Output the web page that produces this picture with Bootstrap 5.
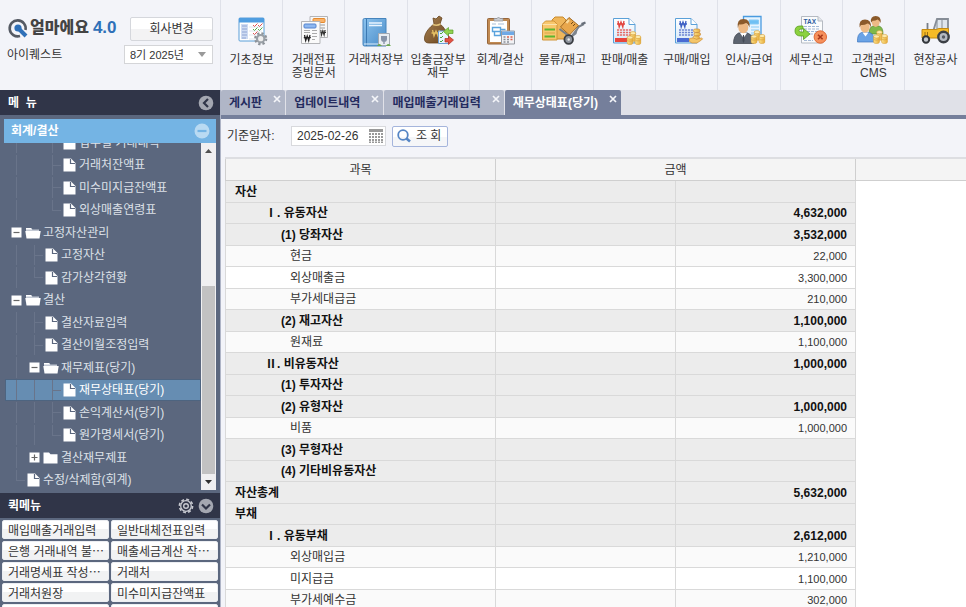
<!DOCTYPE html>
<html lang="ko">
<head>
<meta charset="utf-8">
<meta name="viewport" content="width=device-width, initial-scale=1">
<title>얼마에요 4.0 - 재무상태표(당기)</title>
<link href="https://cdn.jsdelivr.net/npm/bootstrap@5.3.0/dist/css/bootstrap.min.css" rel="stylesheet">
<style>
  body { font: 12px/16px "Liberation Sans", "Noto Sans CJK KR", sans-serif; color: #333; background: #f3f4f9; }
  a { color: inherit; text-decoration: none; }
  button, input, select { font: inherit; color: inherit; }
  svg { display: block; flex: none; }

  .brand-box { width: 221px; padding: 17px 7px 0; border-right: 1px solid #dfe1e9; }
  .brand-name { font-size: 16px; line-height: 22px; font-weight: 900; color: #444; }
  .brand-ver { font-size: 17px; line-height: 20px; font-weight: 700; color: #2f70b8; margin-left: 4px; }
  .soft-btn { border: 1px solid #d5d7dc; border-radius: 2px; background: linear-gradient(#fff 50%, #f3f3f4 50%); padding: 0; }
  .switch-btn { width: 83px; height: 24px; }
  .year-select { width: 89px; height: 19px; border: 1px solid #d4d5d8; border-radius: 0; padding: 0 0 0 5px; font-size: 11px; appearance: none;
    background: #fff url("data:image/svg+xml,%3Csvg xmlns='http://www.w3.org/2000/svg' width='8' height='5'%3E%3Cpath d='M0 0h8L4 5z' fill='%23999'/%3E%3C/svg%3E") no-repeat right 6px center; }

  .app-bar { height: 90px; }
  .module { flex: 1 1 0; min-width: 0; height: 90px; padding-top: 15px; border-right: 1px solid #dfe1e9; line-height: 13px; white-space: nowrap; }
  .module:last-child { border-right: 0; }
  .module span { margin-top: 7px; }
  .module svg { overflow: visible; }

  .side { width: 220px; background: #5b677e; color: #f1f3f7; }
  .side-title { height: 25px; background: #303548; color: #fff; font-weight: 700; padding: 0 6px 0 8px; }
  .icon-btn { border: 0; padding: 0; background: none; }
  .section-title { height: 24px; margin: 4px 4px 0; padding: 0 6px 0 7px; background: #74b4e4; color: #fff; font-weight: 700; }
  .tree-area { margin: 0 4px 3px 5px; min-height: 0; }
  .tree { margin: -12px 0 0; }
  .tree a { height: 22px; padding-left: 1px; border: 1px solid transparent; white-space: nowrap; color: #dde1e8; }
  .tree li:nth-child(odd) a { height: 23px; }
  .tree a.active { background: #668db2; border-color: #4d6480; color: #fff; }
  .guide { width: 18px; align-self: stretch; background: linear-gradient(#69748a, #69748a) center / 1px 100% no-repeat; }
  .guide.tick { background: linear-gradient(#69748a, #69748a) center / 1px 100% no-repeat, linear-gradient(#69748a, #69748a) right center / 9px 1px no-repeat; }
  .guide.last { background: linear-gradient(#69748a, #69748a) center top / 1px 50% no-repeat, linear-gradient(#69748a, #69748a) right center / 9px 1px no-repeat; }
  .twist { width: 18px; padding-left: 4px; }
  .leaf { width: 18px; padding-left: 2px; }
  .fold { width: 18px; }
  .scroll-track { width: 15px; background: #f0f0f1; }
  .scroll-space { flex: 127; }
  .scroll-thumb { flex: 187; background: #c2c2c2; margin: 0 1px; }
  .scroll-arrow { height: 16px; }

  .quick { height: 114px; }
  .quick-grid { grid-template-columns: 1fr 1fr; gap: 2px; padding: 2px 2px 0; }
  .quick-grid button { height: 19px; border: 1px solid #eceef2; border-radius: 2px; background: linear-gradient(#fff 50%, #f1f2f3 50%); color: #333; padding: 0 5px; line-height: 16px; text-align: left; white-space: nowrap; overflow: hidden; font-family: "Noto Sans CJK KR", sans-serif; }

  .workspace { border-left: 1px solid #aeb4c6; }
  .tab-strip { height: 29px; background: #e0e1e8; border-bottom: 4px solid #757f9b; gap: 1px; }
  .tab-item { background: #b0b6c7; color: #242b5e; font-weight: 700; border-radius: 2px 2px 0 0; padding: 0 4px 0 8px; gap: 11px; }
  .tab-item.active { background: #757f9b; color: #fff; }
  .tab-item button { margin-top: 5px; }
  .filter { height: 38px; padding: 3px 6px 7px; }
  .filter label { width: 64px; }
  .date-box { width: 95px; height: 20px; border: 1px solid #d8d9dd; background: #fff; padding: 0 2px 0 5px; }
  .date-box input { width: 70px; border: 0; padding: 0; background: none; outline: 0; font-size: 12px; }
  .search-btn { width: 56px; height: 21px; margin-left: 6px; border: 1px solid #a5b5dc; border-radius: 2px; background: linear-gradient(#fff 50%, #f5f6f8 50%); padding: 0 4px; gap: 5px; }

  .sheet { margin-left: 4px; background: #fff; border-top: 2px solid #dddee2; }
  .sheet table { table-layout: fixed; border-collapse: separate; border-spacing: 0; width: 100%; }
  .c-name { width: 271px; }
  .c-amt { width: 180px; }
  .sheet th, .sheet td { padding: 0; border: 0 solid #d9d9d9; border-bottom-width: 1px; border-right-width: 1px; line-height: 16px; white-space: nowrap; }
  .sheet thead th { height: 22px; background: #f4f4f4; font-weight: 400; text-align: center; border-color: #cfcfcf; }
  .sheet thead th:last-child { border-right: 0; }
  .sheet tbody th { height: 21px; border-left-width: 1px; font-weight: 400; }
  .sheet thead th:first-child { border-left-width: 1px; }
  .sheet tbody tr:nth-child(odd) th { height: 22px; }
  .sheet tbody tr { background: #fafafa; }
  .sheet tbody tr.plain { background: #fff; }
  .sheet tbody tr.total { background: #ececec; color: #111; }
  .sheet tbody .total th, .sheet tbody .total td { font-weight: 700; font-size: 12px; }
  .sheet tbody td { text-align: right; padding-right: 8px; font-size: 11px; }
  .sheet tbody td:last-child { background: #fff; border: 0; }
  .sheet .lv0 { padding-left: 9px; }
  .sheet .lv1 { padding-left: 39px; }
  .sheet .lv2 { padding-left: 55px; }
  .sheet .lv3 { padding-left: 64px; }
</style>
<script src="https://cdn.jsdelivr.net/npm/bootstrap@5.3.0/dist/js/bootstrap.bundle.min.js"></script>
</head>
<body class="vh-100 d-flex flex-column overflow-hidden">

<svg width="0" height="0" class="position-absolute" aria-hidden="true">
  <defs>
    <linearGradient id="gBlue" x2="1" y2="1"><stop stop-color="#8cc3ee"/><stop offset="1" stop-color="#4a8cc8"/></linearGradient>
    <linearGradient id="gPage" x2="0" y2="1"><stop stop-color="#fff"/><stop offset="1" stop-color="#d5e8f8"/></linearGradient>
    <linearGradient id="gBrown" x2="1" y2="1"><stop stop-color="#a98353"/><stop offset="1" stop-color="#6b4520"/></linearGradient>
    <linearGradient id="gGold" x2="1"><stop stop-color="#fbe08a"/><stop offset="1" stop-color="#e8ae3c"/></linearGradient>
    <symbol id="coins" viewBox="0 0 15 14">
      <g fill="url(#gGold)" stroke="#d9a13a" stroke-width=".6">
        <path d="M4 2.2v8h5v-8z"/><ellipse cx="6.5" cy="2.2" rx="2.9" ry="1.6" fill="#fdebad"/>
        <path d="M8.6 6v6c0 2 5.8 2 5.8 0V6z"/><ellipse cx="11.5" cy="6" rx="2.9" ry="1.6" fill="#fdebad"/>
        <path d="M.6 6.500v5.500c0 2 5.800 2 5.800 0V6.500z"/><ellipse cx="3.500" cy="6.500" rx="2.900" ry="1.600" fill="#fdebad"/>
      </g>
      <path d="M.8 9.300c1 1.200 4.400 1.200 5.400 0M8.800 9c1 1.200 4.400 1.200 5.400 0" fill="none" stroke="#d9a13a" stroke-width=".6"/>
    </symbol>
    <symbol id="doc" viewBox="0 0 13 14"><path d="M.5.500h7.500l4.500 4.500v8.500H.5z" fill="#fff"/><path d="M7.500 1v4.500H12" fill="none" stroke="#5b677e" stroke-width="1.200"/></symbol>
    <symbol id="open" viewBox="0 0 16 12"><path d="M1 1h5l1.500 1.500H14V4H1z" fill="#c3c9d4"/><path d="M.3 4h15.400L14.500 11.500h-13z" fill="#fff"/><path d="M1 1h5l1 1.500H1z" fill="#fff"/></symbol>
    <symbol id="closed" viewBox="0 0 16 12"><path d="M.5.500h5.500L7.500 2.200h7v9.300H.5z" fill="#fff"/></symbol>
    <symbol id="minus" viewBox="0 0 11 11"><path d="M.5.500h10v10H.5z" fill="#fff"/><path d="M2.500 5.500h6" stroke="#666" stroke-width="1.200"/></symbol>
    <symbol id="plus" viewBox="0 0 11 11"><path d="M.5.500h10v10H.5z" fill="#fff"/><path d="M2.500 5.500h6M5.500 2.500v6" stroke="#666" stroke-width="1.200"/></symbol>
    <symbol id="cross" viewBox="0 0 8 8"><path d="M1 1l6 6M7 1L1 7" stroke="#f4f5f9" stroke-width="1.700"/></symbol>
  </defs>
</svg>

<header class="app-bar d-flex flex-shrink-0">
  <div class="brand-box flex-shrink-0 d-flex justify-content-between">
    <div>
      <div class="d-flex align-items-center">
        <svg width="23" height="22" viewBox="0 0 23 22" aria-hidden="true"><path d="M13 19A8 8 0 1 1 18.500 13" fill="none" stroke="#555a63" stroke-width="2.600"/><circle cx="11" cy="11" r="3.600" fill="#2f70b8"/><path d="M12 12l7 7" stroke="#2f70b8" stroke-width="4"/></svg>
        <span class="brand-name">얼마에요</span><span class="brand-ver">4.0</span>
      </div>
      <div class="mt-1 pt-1">아이퀘스트</div>
    </div>
    <div class="d-flex flex-column align-items-end">
      <button type="button" class="soft-btn switch-btn">회사변경</button>
      <select class="year-select mt-1" aria-label="회계기수"><option>8기 2025년</option></select>
    </div>
  </div>

  <nav class="d-flex flex-fill" aria-label="업무">
    <a href="#" class="module d-flex flex-column align-items-center text-center">
      <svg width="32" height="32" viewBox="0 0 32 32"><rect x="3" y="3" width="25" height="23" rx="1" fill="#fff" stroke="#5a9fd8"/><path d="M3 3h25v4.500H3z" fill="#4f9de0"/><path d="M5 9h7v15H5z" fill="#cfdcf3"/><path d="M6 11h5M6 14h5M6 17h5M6 20h5M6 23h4" stroke="#8ea4d4"/><path d="M13 12h13M13 16h13M13 20h13M13 24h8" stroke="#d4dde8" stroke-width=".7"/><path d="M17 10l1.500 1.500 3-3M22 10l1.500 1.500 3-3M17 18l1.500 1.500 3-3" fill="none" stroke="#e05252"/><path d="M17 14l1.500 1.500 3-3M22 14l1.500 1.500 3-3" fill="none" stroke="#56ae4c"/><circle cx="24.700" cy="23.700" r="5.300" fill="none" stroke="#8c9299" stroke-width="2.600" stroke-dasharray="2.200 1.970"/><circle cx="24.700" cy="23.700" r="3.700" fill="#eee" stroke="#999fa6" stroke-width="2.200"/></svg>
      <span>기초정보</span></a>
    <a href="#" class="module d-flex flex-column align-items-center text-center">
      <svg width="32" height="32" viewBox="0 0 32 32"><g stroke="#b4b5b8" fill="#f7f7f7"><path d="M12 1.500h17.500v21H12z"/></g><rect x="15" y="3.500" width="12" height="4" rx="1" fill="#f9b268" stroke="#e58a2e"/><path d="M15 10h12M20 13h7M23 16h4" stroke="#999"/><path d="M22.500 15l1 5 1.300-4 1.300 4 1-5M22 17.500h6" fill="none" stroke="#333" stroke-width="1.200"/><path d="M3.500 6.500h18.500V28.500H3.500z" fill="#fafafa" stroke="#b4b5b8"/><rect x="6" y="9" width="12" height="4" rx="1" fill="#8eb8f0" stroke="#5584d0"/><path d="M6 15.500h6M6 17.500h6M14 15.500h5M14 18.500h5M14 21.500h5M14 24.500h3" stroke="#aaa"/><path d="M6.500 20l1.200 5.500L9.200 21l1.500 4.500L12 20M5.800 22.700h7" fill="none" stroke="#222" stroke-width="1.300"/></svg>
      <span>거래전표<br>증빙문서</span></a>
    <a href="#" class="module d-flex flex-column align-items-center text-center">
      <svg width="32" height="32" viewBox="0 0 32 32"><path d="M3 5q0-1.500 1.500-1.500H26V31H4.500Q3 31 3 29.500z" fill="url(#gBlue)" stroke="#4684bd"/><path d="M6.500 4v27" stroke="#3c79b3"/><path d="M9 8h13M9 10.500h13" stroke="#eaf5ff" stroke-width="1.300"/><path d="M4 29h22" stroke="#dcecfa"/><path d="M18.500 18.500h11v12h-11z" fill="#e9edf2" stroke="#a2a8b0"/><path d="M21 21h6v3q0 3-3 3t-3-3zM23.300 27h1.400v2h-1.400z" fill="#8894a8"/><path d="M17 31q2-4 5 0zM26 31q2-4 5 0z" fill="#6aa84c"/></svg>
      <span>거래처장부</span></a>
    <a href="#" class="module d-flex flex-column align-items-center text-center">
      <svg width="32" height="32" viewBox="0 0 32 32"><path d="M11 3l3 1 3-3 3 2-2 6c4 3 8 9 7 14q-.5 5-6 5H7q-5 0-4.500-5C3 17 8 12 12 9z" fill="url(#gBrown)" stroke="#67451f" stroke-width=".8"/><path d="M11 9.500q4 1.500 7.500-.5" stroke="#e4c47c" stroke-width="1.500" fill="none"/><path d="M10.500 15l1.500 6 2-5 2 5 1.500-6M9.500 18h9" fill="none" stroke="#e2bd64" stroke-width="1.300"/><path d="M16.500 16h10v12.500h-10z" fill="#e9f3ff" stroke="#6da0d6"/><path d="M18 18l1 1 2-2M18 22l1 1 2-2M18 26l1 1 2-2" fill="none" stroke="#4ba53f"/><path d="M21.500 16.500l5-4V15H31v3.500h-4.500V21z" fill="#91d14f" stroke="#5a9f2a" stroke-width=".7"/><path d="M31.500 25l-5-4v2.500H23V27h3.500v2.500z" fill="#e35142" stroke="#ad2e22" stroke-width=".7"/></svg>
      <span>입출금장부<br>재무</span></a>
    <a href="#" class="module d-flex flex-column align-items-center text-center">
      <svg width="32" height="32" viewBox="0 0 32 32"><rect x="3.500" y="3.500" width="22" height="25.500" rx="1" fill="#c18a52" stroke="#96653a"/><path d="M6 6h17v21H6z" fill="#fff"/><path d="M10 6V3.500h3q1.500-3 3 0h3V6z" fill="#c9ccd2" stroke="#8f949c" stroke-width=".7"/><path d="M8 9h4M14 9h6" stroke="#a9bfd9"/><path d="M8.500 12.500h8v4h-8zM10.500 16.500v4h6v-6h5" fill="none" stroke="#5aa3dd" stroke-width="1.400"/><path d="M17.500 16h13v13h-13z" fill="#f1f2f5" stroke="#979ba2"/><path d="M18 16.500h12V20H18z" fill="#6fa9e6"/><path d="M19.500 22h2M19.500 24.500h2M19.500 27h2M23 24.500h2M23 27h2" stroke="#8b8f96" stroke-width="1.500"/><path d="M23 22h2M26.500 22h2M26.500 24.500h2" stroke="#e0604c" stroke-width="1.500"/></svg>
      <span>회계/결산</span></a>
    <a href="#" class="module d-flex flex-column align-items-center text-center">
      <svg width="48" height="32" viewBox="0 0 48 32"><path d="M14 5l3-3h8l3 3v19H14z" fill="#efb65b" stroke="#c98a2c"/><path d="M4.500 9l3-3h8.500l3 3v16H4.500z" fill="#f8c76d" stroke="#d1963a"/><path d="M4.500 9.500H19" stroke="#fbe3ac"/><path d="M6.500 14.500H17M6.500 21.500H17" stroke="#5cb531" stroke-width="1.800"/><path d="M6.500 18H17" stroke="#d9a545"/><path d="M21.500 14l11.500 8.500 8-11 5-2.500" fill="none" stroke="#777e88" stroke-width="2"/><path d="M31 2.500l9.500 8-9 9.500-9-8z" fill="#e9a74c" stroke="#9f6a26"/><path d="M31 5l-2.500 3" stroke="#f9dca0" stroke-width="2"/><path d="M33 9l2-2M35 11l2-2" stroke="#6f4618"/><path d="M28 20l4 1.500 8-8.500-1.500 6-6 4.500z" fill="#7d848e"/><circle cx="30.700" cy="24.500" r="4.300" fill="#8e949e" stroke="#3a3d43" stroke-width="1.800"/><circle cx="30.700" cy="24.500" r="1.200" fill="#eee"/><path d="M43.500 9l4-1.500" stroke="#666d78" stroke-width="2.400"/></svg>
      <span>물류/재고</span></a>
    <a href="#" class="module d-flex flex-column align-items-center text-center">
      <svg width="32" height="32" viewBox="0 0 32 32"><path d="M4.500 3.500H20l6 6V28H4.500z" fill="url(#gPage)" stroke="#5aa0d8"/><path d="M20 3.500v6h6" fill="#fff" stroke="#5aa0d8"/><path d="M9 6l1.200 6 1.800-5 1.800 5L15 6M8 9h8" fill="none" stroke="#e2453f" stroke-width="1.300"/><path d="M8 15h15M8 17.500h15M8 20h15" stroke="#e56a64" stroke-width="1.500" stroke-dasharray="2.200 .8"/><path d="M6 23h12v4H6z" fill="#e8443b"/><use href="#coins" x="17.500" y="16" width="15" height="14"/></svg>
      <span>판매/매출</span></a>
    <a href="#" class="module d-flex flex-column align-items-center text-center">
      <svg width="32" height="32" viewBox="0 0 32 32"><path d="M4.500 3.500H20l6 6V28H4.500z" fill="url(#gPage)" stroke="#5aa0d8"/><path d="M20 3.500v6h6" fill="#fff" stroke="#5aa0d8"/><path d="M9 6l1.200 6 1.800-5 1.800 5L15 6M8 9h8" fill="none" stroke="#3c5fc4" stroke-width="1.300"/><path d="M8 15h15M8 17.500h15M8 20h15" stroke="#6e86d2" stroke-width="1.500" stroke-dasharray="2.200 .8"/><path d="M6 23h12v4H6z" fill="#4a6bd3"/><g fill="url(#gGold)" stroke="#c88a3a" stroke-width=".7"><rect x="22.500" y="14" width="6.500" height="3.500" rx="1.700"/><rect x="23" y="17.500" width="6.500" height="3.500" rx="1.700"/><rect x="22" y="21" width="6.500" height="3.500" rx="1.700"/></g><path d="M18.500 23.500q4-1.500 7 .8l5-1.300q2 .5 0 2L26 28h-5l-2.500-1.500z" fill="#f4c66a" stroke="#d08f36" stroke-width=".7"/></svg>
      <span>구매/매입</span></a>
    <a href="#" class="module d-flex flex-column align-items-center text-center">
      <svg width="32" height="32" viewBox="0 0 32 32"><path d="M10.500 1.500h17.500v19H10.500z" fill="#e6f4ff" stroke="#4a9be0" stroke-width="1.300"/><path d="M16 5h9.500v4H16zM18 12h8M18 15h8M18 18h6" fill="#6fc0f4" stroke="#8acbf5"/><path d="M.5 28.500q0-8 5-10.500h9q6 2 6 10.500z" fill="#5d6470" stroke="#3c414a" stroke-width=".7"/><path d="M7 18l3.500 5 3.500-5z" fill="#fff"/><path d="M10 20h1l.5 6-1 2-1-2z" fill="#454b57"/><ellipse cx="10.300" cy="12.500" rx="5" ry="5.800" fill="#edba86"/><path d="M4.800 13Q3.500 4 10.500 4t6 8.500q-1.500-4-3.500-4.500-4 2-7 1.500z" fill="#8b5a2b"/><use href="#coins" x="17.500" y="15" width="15" height="14"/></svg>
      <span>인사/급여</span></a>
    <a href="#" class="module d-flex flex-column align-items-center text-center">
      <svg width="32" height="32" viewBox="0 0 32 32"><path d="M6.500 1.500H23l4.500 4.500V28H6.500z" fill="#fafbfc" stroke="#b5bac2"/><path d="M23 1.500V6h4.500" fill="#e3e6ea" stroke="#b5bac2"/><text x="8.500" y="9" font-size="6.500" font-weight="700" fill="#2c5c9e">TAX</text><path d="M9 11.500h15M9 14h15M12 16.500h12M15 19h6M9 25.500h9" stroke="#a3b9d6" stroke-dasharray="3 1"/><path d="M8 11H5Q0 11 0 16t6 5h2.500v3.500L15 19l-6.500-5.500V17H6q-2 0-2-1.500T6 14h2z" fill="#8cd13f" stroke="#58a01e" stroke-width=".8"/><circle cx="25.300" cy="22" r="6.200" fill="#f6905c" stroke="#df6a35"/><path d="M23 19.700l4.600 4.600M27.600 19.700L23 24.300" stroke="#a8381a" stroke-width="1.600"/></svg>
      <span>세무신고</span></a>
    <a href="#" class="module d-flex flex-column align-items-center text-center">
      <svg width="32" height="32" viewBox="0 0 32 32"><path d="M12 19q0-7 4-8h6q4 1 4 8z" fill="#80b84a" stroke="#56892b" stroke-width=".7"/><ellipse cx="18.700" cy="7" rx="4" ry="5" fill="#edba86"/><path d="M14 7.500Q13 1 18.700 1t5 7q-1.500-3-3-3.500-3 1.500-5 1.200z" fill="#8b5a2b"/><path d="M.5 27q-.5-8 4-9.500h8q5 1.500 4.500 9.500z" fill="#6aa3e6" stroke="#3c74bd" stroke-width=".7"/><path d="M5.500 17.500l3 4 3-4z" fill="#fff"/><ellipse cx="8" cy="12" rx="4.700" ry="5.500" fill="#edba86"/><path d="M2.600 12.500Q1.500 4.500 8 4.500t6 8q-1.500-4-3.500-4-3.500 2-6.500 1.500z" fill="#8b5a2b"/><use href="#coins" x="16" y="15" width="15" height="14"/></svg>
      <span>고객관리<br>CMS</span></a>
    <a href="#" class="module d-flex flex-column align-items-center text-center">
      <svg width="32" height="32" viewBox="0 0 32 32"><path d="M14.500 15L18 4h11v13" fill="#dfe6ed" stroke="#868d97" stroke-width="1.800"/><path d="M18 4v11M23 4v11" stroke="#868d97"/><path d="M8.500 8v8" stroke="#777e88" stroke-width="1.800"/><path d="M3 14.500h14l3-1h9.500V23H3z" fill="#f6bb27" stroke="#c48a12"/><path d="M6 17v4M8.500 17v4" stroke="#9b6e12"/><circle cx="7" cy="24.500" r="3.200" fill="#c4c8ce" stroke="#33363b" stroke-width="2"/><circle cx="24.500" cy="22" r="5.200" fill="#b5bac2" stroke="#3c4046" stroke-width="2.400"/><circle cx="24.500" cy="22" r="1.700" fill="#555b64"/></svg>
      <span>현장공사</span></a>
  </nav>
</header>

<div class="d-flex flex-fill overflow-hidden">
  <aside class="side flex-shrink-0 d-flex flex-column">
    <div class="side-title d-flex align-items-center justify-content-between flex-shrink-0">
      <span>메&nbsp; 뉴</span>
      <button type="button" class="icon-btn" aria-label="메뉴 접기"><svg width="16" height="16" viewBox="0 0 16 16"><circle cx="8" cy="8" r="7.300" fill="#a4a7b1"/><path d="M10 4L6 8l4 4" fill="none" stroke="#303548" stroke-width="2.200"/></svg></button>
    </div>
    <div class="section-title d-flex align-items-center justify-content-between flex-shrink-0">
      <span>회계/결산</span>
      <button type="button" class="icon-btn" aria-label="접기"><svg width="16" height="16" viewBox="0 0 16 16"><circle cx="8" cy="8" r="7.500" fill="#b9daf2"/><path d="M3.500 8h9" stroke="#74b4e4" stroke-width="2.200"/></svg></button>
    </div>
    <div class="tree-area d-flex flex-fill overflow-hidden">
      <ul class="tree list-unstyled flex-fill">
        <li><a href="#" class="d-flex align-items-center"><span class="guide"></span><span class="guide opacity-0"></span><span class="guide tick"></span><span class="leaf"><svg width="13" height="14"><use href="#doc"/></svg></span>업무별 거래내역</a></li>
        <li><a href="#" class="d-flex align-items-center"><span class="guide"></span><span class="guide opacity-0"></span><span class="guide tick"></span><span class="leaf"><svg width="13" height="14"><use href="#doc"/></svg></span>거래처잔액표</a></li>
        <li><a href="#" class="d-flex align-items-center"><span class="guide"></span><span class="guide opacity-0"></span><span class="guide tick"></span><span class="leaf"><svg width="13" height="14"><use href="#doc"/></svg></span>미수미지급잔액표</a></li>
        <li><a href="#" class="d-flex align-items-center"><span class="guide"></span><span class="guide opacity-0"></span><span class="guide last"></span><span class="leaf"><svg width="13" height="14"><use href="#doc"/></svg></span>외상매출연령표</a></li>
        <li><a href="#" class="d-flex align-items-center"><span class="twist"><svg width="11" height="11"><use href="#minus"/></svg></span><span class="fold"><svg width="16" height="12"><use href="#open"/></svg></span>고정자산관리</a></li>
        <li><a href="#" class="d-flex align-items-center"><span class="guide"></span><span class="guide tick"></span><span class="leaf"><svg width="13" height="14"><use href="#doc"/></svg></span>고정자산</a></li>
        <li><a href="#" class="d-flex align-items-center"><span class="guide"></span><span class="guide last"></span><span class="leaf"><svg width="13" height="14"><use href="#doc"/></svg></span>감가상각현황</a></li>
        <li><a href="#" class="d-flex align-items-center"><span class="twist"><svg width="11" height="11"><use href="#minus"/></svg></span><span class="fold"><svg width="16" height="12"><use href="#open"/></svg></span>결산</a></li>
        <li><a href="#" class="d-flex align-items-center"><span class="guide"></span><span class="guide tick"></span><span class="leaf"><svg width="13" height="14"><use href="#doc"/></svg></span>결산자료입력</a></li>
        <li><a href="#" class="d-flex align-items-center"><span class="guide"></span><span class="guide tick"></span><span class="leaf"><svg width="13" height="14"><use href="#doc"/></svg></span>결산이월조정입력</a></li>
        <li><a href="#" class="d-flex align-items-center"><span class="guide"></span><span class="twist"><svg width="11" height="11"><use href="#minus"/></svg></span><span class="fold"><svg width="16" height="12"><use href="#open"/></svg></span>재무제표(당기)</a></li>
        <li><a href="#" class="d-flex align-items-center active" aria-current="page"><span class="guide"></span><span class="guide"></span><span class="guide tick"></span><span class="leaf"><svg width="13" height="14"><use href="#doc"/></svg></span>재무상태표(당기)</a></li>
        <li><a href="#" class="d-flex align-items-center"><span class="guide"></span><span class="guide"></span><span class="guide tick"></span><span class="leaf"><svg width="13" height="14"><use href="#doc"/></svg></span>손익계산서(당기)</a></li>
        <li><a href="#" class="d-flex align-items-center"><span class="guide"></span><span class="guide"></span><span class="guide last"></span><span class="leaf"><svg width="13" height="14"><use href="#doc"/></svg></span>원가명세서(당기)</a></li>
        <li><a href="#" class="d-flex align-items-center"><span class="guide"></span><span class="twist"><svg width="11" height="11"><use href="#plus"/></svg></span><span class="fold"><svg width="16" height="12"><use href="#closed"/></svg></span>결산재무제표</a></li>
        <li><a href="#" class="d-flex align-items-center"><span class="guide last"></span><span class="leaf"><svg width="13" height="14"><use href="#doc"/></svg></span>수정/삭제함(회계)</a></li>
      </ul>
      <div class="scroll-track d-flex flex-column" aria-hidden="true">
        <div class="scroll-arrow d-flex align-items-center justify-content-center"><svg width="7" height="4" viewBox="0 0 7 4"><path d="M0 4h7L3.500 0z" fill="#505050"/></svg></div>
        <div class="scroll-space"></div>
        <div class="scroll-thumb"></div>
        <div class="scroll-arrow d-flex align-items-center justify-content-center"><svg width="7" height="4" viewBox="0 0 7 4"><path d="M0 0h7L3.500 4z" fill="#303030"/></svg></div>
      </div>
    </div>
    <section class="quick flex-shrink-0 overflow-hidden">
      <div class="side-title d-flex align-items-center justify-content-between">
        <span>퀵메뉴</span>
        <span class="d-flex gap-1">
          <button type="button" class="icon-btn" aria-label="퀵메뉴 설정"><svg width="16" height="16" viewBox="0 0 16 16"><circle cx="8" cy="8" r="6.600" fill="none" stroke="#c8cad1" stroke-width="1.600" stroke-dasharray="3 2.180"/><circle cx="8" cy="8" r="5.300" fill="none" stroke="#c8cad1" stroke-width="1.300"/><circle cx="8" cy="8" r="2.300" fill="none" stroke="#c8cad1" stroke-width="1.400"/></svg></button>
          <button type="button" class="icon-btn" aria-label="퀵메뉴 접기"><svg width="16" height="16" viewBox="0 0 16 16"><circle cx="8" cy="8" r="7.300" fill="#a4a7b1"/><path d="M4 6.500l4 4 4-4" fill="none" stroke="#303548" stroke-width="2.200"/></svg></button>
        </span>
      </div>
      <div class="quick-grid d-grid">
        <button type="button">매입매출거래입력</button><button type="button">일반대체전표입력</button>
        <button type="button">은행 거래내역 불…</button><button type="button">매출세금계산 작…</button>
        <button type="button">거래명세표 작성…</button><button type="button">거래처</button>
        <button type="button">거래처원장</button><button type="button">미수미지급잔액표</button>
        <button type="button" aria-label="빈 메뉴 1"></button><button type="button" aria-label="빈 메뉴 2"></button>
      </div>
    </section>
  </aside>

  <main class="workspace flex-fill d-flex flex-column overflow-hidden">
    <div class="tab-strip d-flex flex-shrink-0">
      <div class="tab-item d-flex align-items-center"><a href="#">게시판</a><button type="button" class="icon-btn align-self-start" aria-label="게시판 닫기"><svg width="8" height="8"><use href="#cross"/></svg></button></div>
      <div class="tab-item d-flex align-items-center"><a href="#">업데이트내역</a><button type="button" class="icon-btn align-self-start" aria-label="업데이트내역 닫기"><svg width="8" height="8"><use href="#cross"/></svg></button></div>
      <div class="tab-item d-flex align-items-center"><a href="#">매입매출거래입력</a><button type="button" class="icon-btn align-self-start" aria-label="매입매출거래입력 닫기"><svg width="8" height="8"><use href="#cross"/></svg></button></div>
      <div class="tab-item active d-flex align-items-center"><a href="#" aria-current="page">재무상태표(당기)</a><button type="button" class="icon-btn align-self-start" aria-label="재무상태표 닫기"><svg width="8" height="8"><use href="#cross"/></svg></button></div>
    </div>

    <form class="filter d-flex align-items-center flex-shrink-0">
      <label for="baseDate">기준일자:</label>
      <div class="date-box d-flex align-items-center justify-content-between">
        <input type="text" id="baseDate" value="2025-02-26">
        <button type="button" class="icon-btn" aria-label="달력"><svg width="14" height="14" viewBox="0 0 14 14"><path d="M0 0h14v3H0z" fill="#999"/><path d="M0 5h14M0 8h14M0 11h14M0 13.500h14" stroke="#999" stroke-width="2" stroke-dasharray="2 1"/></svg></button>
      </div>
      <button type="button" class="search-btn d-flex align-items-center"><svg width="14" height="14" viewBox="0 0 14 14"><circle cx="6" cy="6" r="4.800" fill="none" stroke="#5585c4" stroke-width="1.800"/><path d="M9.500 9.500l3.500 3" stroke="#5585c4" stroke-width="2.600"/></svg>조&nbsp;회</button>
    </form>

    <div class="sheet flex-fill overflow-hidden">
      <table>
        <colgroup><col class="c-name"><col class="c-amt"><col class="c-amt"><col></colgroup>
        <thead><tr><th scope="col">과목</th><th scope="colgroup" colspan="2">금액</th><th></th></tr></thead>
        <tbody>
          <tr class="total"><th scope="row" class="lv0">자산</th><td></td><td></td><td></td></tr>
          <tr class="total"><th scope="row" class="lv1">Ⅰ. 유동자산</th><td></td><td>4,632,000</td><td></td></tr>
          <tr class="total"><th scope="row" class="lv2">(1) 당좌자산</th><td></td><td>3,532,000</td><td></td></tr>
          <tr><th scope="row" class="lv3">현금</th><td></td><td>22,000</td><td></td></tr>
          <tr class="plain"><th scope="row" class="lv3">외상매출금</th><td></td><td>3,300,000</td><td></td></tr>
          <tr><th scope="row" class="lv3">부가세대급금</th><td></td><td>210,000</td><td></td></tr>
          <tr class="total"><th scope="row" class="lv2">(2) 재고자산</th><td></td><td>1,100,000</td><td></td></tr>
          <tr><th scope="row" class="lv3">원재료</th><td></td><td>1,100,000</td><td></td></tr>
          <tr class="total"><th scope="row" class="lv1">Ⅱ. 비유동자산</th><td></td><td>1,000,000</td><td></td></tr>
          <tr class="total"><th scope="row" class="lv2">(1) 투자자산</th><td></td><td></td><td></td></tr>
          <tr class="total"><th scope="row" class="lv2">(2) 유형자산</th><td></td><td>1,000,000</td><td></td></tr>
          <tr><th scope="row" class="lv3">비품</th><td></td><td>1,000,000</td><td></td></tr>
          <tr class="total"><th scope="row" class="lv2">(3) 무형자산</th><td></td><td></td><td></td></tr>
          <tr class="total"><th scope="row" class="lv2">(4) 기타비유동자산</th><td></td><td></td><td></td></tr>
          <tr class="total"><th scope="row" class="lv0">자산총계</th><td></td><td>5,632,000</td><td></td></tr>
          <tr class="total"><th scope="row" class="lv0">부채</th><td></td><td></td><td></td></tr>
          <tr class="total"><th scope="row" class="lv1">Ⅰ. 유동부채</th><td></td><td>2,612,000</td><td></td></tr>
          <tr><th scope="row" class="lv3">외상매입금</th><td></td><td>1,210,000</td><td></td></tr>
          <tr class="plain"><th scope="row" class="lv3">미지급금</th><td></td><td>1,100,000</td><td></td></tr>
          <tr><th scope="row" class="lv3">부가세예수금</th><td></td><td>302,000</td><td></td></tr>
        </tbody>
      </table>
    </div>
  </main>
</div>
</body>
</html>
